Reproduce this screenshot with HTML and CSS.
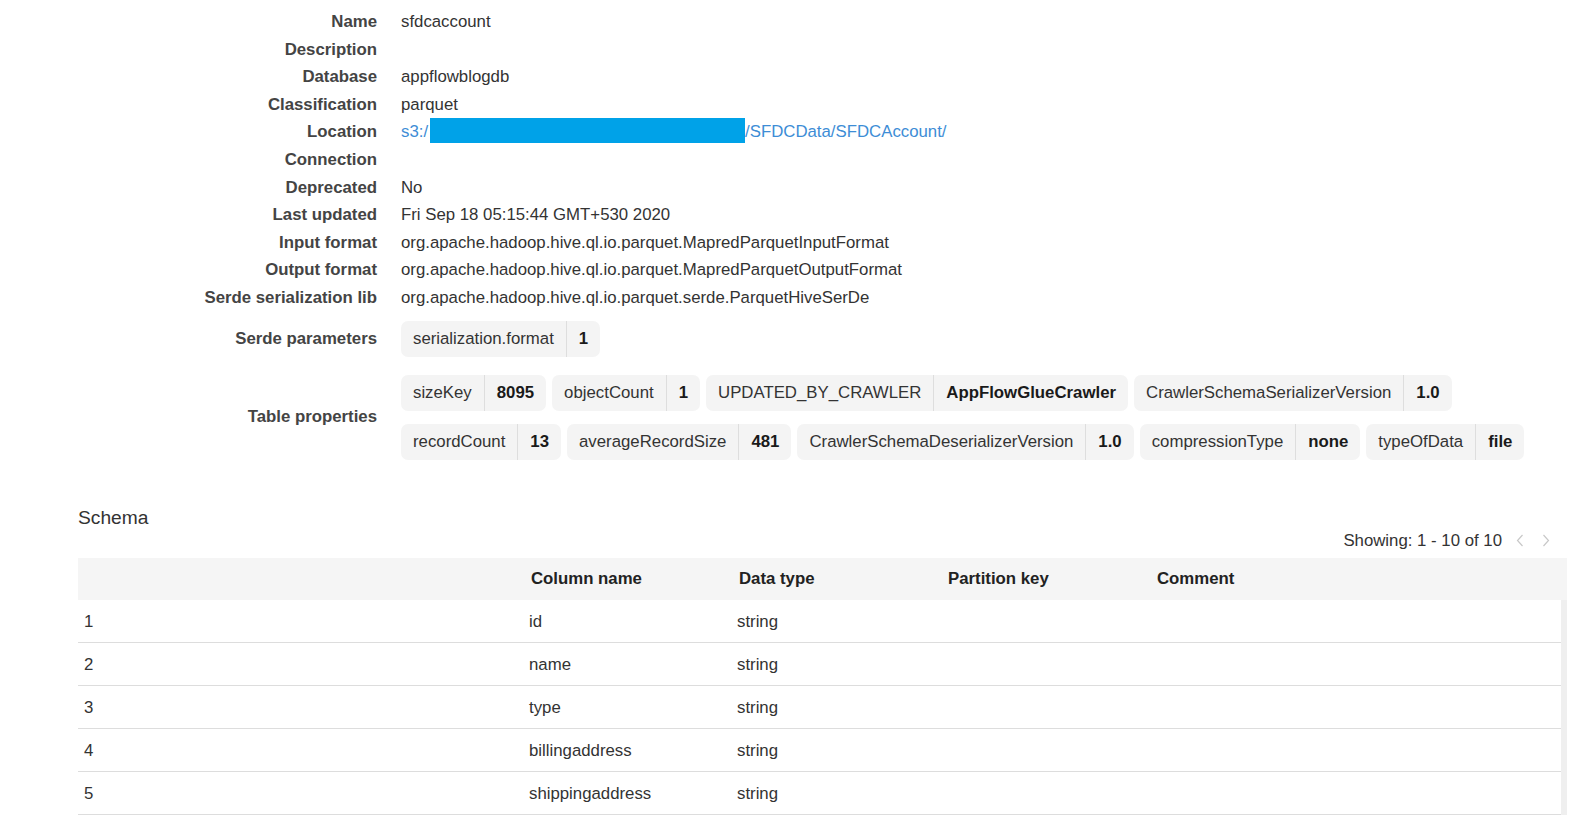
FILE: index.html
```html
<!DOCTYPE html>
<html>
<head>
<meta charset="utf-8">
<link rel="stylesheet" href="styles.css">
</head>
<body>
<div class="details">
  <div class="row"><div class="label">Name</div><div class="value">sfdcaccount</div></div>
  <div class="row"><div class="label">Description</div><div class="value"></div></div>
  <div class="row"><div class="label">Database</div><div class="value">appflowblogdb</div></div>
  <div class="row"><div class="label">Classification</div><div class="value">parquet</div></div>
  <div class="row"><div class="label">Location</div><div class="value"><a class="link">s3:/<span class="redact"></span>/SFDCData/SFDCAccount/</a></div></div>
  <div class="row"><div class="label">Connection</div><div class="value"></div></div>
  <div class="row"><div class="label">Deprecated</div><div class="value">No</div></div>
  <div class="row"><div class="label">Last updated</div><div class="value">Fri Sep 18 05:15:44 GMT+530 2020</div></div>
  <div class="row"><div class="label">Input format</div><div class="value">org.apache.hadoop.hive.ql.io.parquet.MapredParquetInputFormat</div></div>
  <div class="row"><div class="label">Output format</div><div class="value">org.apache.hadoop.hive.ql.io.parquet.MapredParquetOutputFormat</div></div>
  <div class="row"><div class="label">Serde serialization lib</div><div class="value">org.apache.hadoop.hive.ql.io.parquet.serde.ParquetHiveSerDe</div></div>
  <div class="row chiprow serde">
    <div class="label">Serde parameters</div>
    <div class="chips">
      <span class="chip"><span class="k">serialization.format</span><span class="v">1</span></span>
    </div>
  </div>
  <div class="row chiprow props">
    <div class="label">Table properties</div>
    <div class="chips">
      <span class="chip"><span class="k">sizeKey</span><span class="v">8095</span></span>
      <span class="chip"><span class="k">objectCount</span><span class="v">1</span></span>
      <span class="chip"><span class="k">UPDATED_BY_CRAWLER</span><span class="v">AppFlowGlueCrawler</span></span>
      <span class="chip"><span class="k">CrawlerSchemaSerializerVersion</span><span class="v">1.0</span></span>
      <span class="chip"><span class="k">recordCount</span><span class="v">13</span></span>
      <span class="chip"><span class="k">averageRecordSize</span><span class="v">481</span></span>
      <span class="chip"><span class="k">CrawlerSchemaDeserializerVersion</span><span class="v">1.0</span></span>
      <span class="chip"><span class="k">compressionType</span><span class="v">none</span></span>
      <span class="chip"><span class="k">typeOfData</span><span class="v">file</span></span>
    </div>
  </div>
</div>

<div class="schema">
  <h2 class="title">Schema</h2>
  <div class="pager">
    <span>Showing: 1 - 10 of 10</span>
    <svg class="chev" width="8" height="13" viewBox="0 0 8 13"><path d="M6.5 1 L1.5 6.5 L6.5 12" fill="none" stroke="#c8c8c8" stroke-width="1.2"/></svg>
    <svg class="chev" width="8" height="13" viewBox="0 0 8 13"><path d="M1.5 1 L6.5 6.5 L1.5 12" fill="none" stroke="#c8c8c8" stroke-width="1.2"/></svg>
  </div>
  <div class="table">
    <div class="thead">
      <div class="th"></div>
      <div class="th">Column name</div>
      <div class="th">Data type</div>
      <div class="th">Partition key</div>
      <div class="th">Comment</div>
    </div>
    <div class="tbody">
      <div class="tr"><div class="td">1</div><div class="td">id</div><div class="td">string</div><div class="td"></div><div class="td"></div></div>
      <div class="tr"><div class="td">2</div><div class="td">name</div><div class="td">string</div><div class="td"></div><div class="td"></div></div>
      <div class="tr"><div class="td">3</div><div class="td">type</div><div class="td">string</div><div class="td"></div><div class="td"></div></div>
      <div class="tr"><div class="td">4</div><div class="td">billingaddress</div><div class="td">string</div><div class="td"></div><div class="td"></div></div>
      <div class="tr"><div class="td">5</div><div class="td">shippingaddress</div><div class="td">string</div><div class="td"></div><div class="td"></div></div>
    </div>
  </div>
</div>
</body>
</html>
```

FILE: styles.css
```css
html, body {
  margin: 0;
  padding: 0;
  background: #ffffff;
  overflow: hidden;
}
body {
  font-family: "Liberation Sans", Arial, sans-serif;
  font-size: 16.8px;
  color: #333333;
}
.details {
  padding-top: 8px;
  padding-right: 17px;
}
.row {
  display: grid;
  grid-template-columns: 377px 1fr;
  column-gap: 24px;
  line-height: 27.6px;
  height: 27.6px;
}
.label {
  text-align: right;
  font-weight: bold;
  color: #444444;
  white-space: nowrap;
}
.value {
  color: #333333;
  white-space: nowrap;
}
.link {
  color: #3d8dd6;
  text-decoration: none;
}
.redact {
  display: inline-block;
  width: 315px;
  height: 25px;
  margin-left: 2px;
  background: #00a2e8;
  vertical-align: -6px;
}
.chiprow {
  height: auto;
  align-items: center;
}
.serde {
  margin-top: 9px;
}
.props {
  margin-top: 18px;
}
.chips {
  display: flex;
  flex-wrap: wrap;
  column-gap: 6px;
  row-gap: 13px;
}
.chip {
  display: inline-flex;
  height: 36px;
  line-height: 36px;
  background: #f4f4f4;
  border-radius: 7px;
  white-space: nowrap;
}
.chip .k {
  padding: 0 12px;
  color: #333333;
}
.chip .v {
  padding: 0 12px;
  font-weight: bold;
  color: #1a1a1a;
  border-left: 1px solid #dedede;
}
.schema {
  padding: 0 17px 0 78px;
  margin-top: 47px;
}
.title {
  margin: 0;
  font-size: 19.2px;
  font-weight: normal;
  line-height: 22px;
  color: #333333;
}
.pager {
  display: flex;
  justify-content: flex-end;
  align-items: center;
  height: 20px;
  line-height: 20px;
  margin-top: 2px;
  padding-right: 17px;
  color: #333333;
}
.chev {
  margin-left: 14px;
}
.chev + .chev {
  margin-left: 18px;
}
.table {
  margin-top: 7px;
}
.thead {
  display: grid;
  grid-template-columns: 445px 208px 209px 209px 1fr;
  height: 42px;
  background: #f5f5f5;
  align-items: center;
}
.th {
  font-weight: bold;
  padding-left: 8px;
  color: #222222;
}
.tbody {
  border-right: 6px solid #efefef;
}
.tr {
  display: grid;
  grid-template-columns: 445px 208px 209px 209px 1fr;
  height: 42px;
  border-bottom: 1px solid #dddddd;
  align-items: center;
}
.td {
  padding-left: 6px;
  padding-top: 2px;
  color: #333333;
}
```
